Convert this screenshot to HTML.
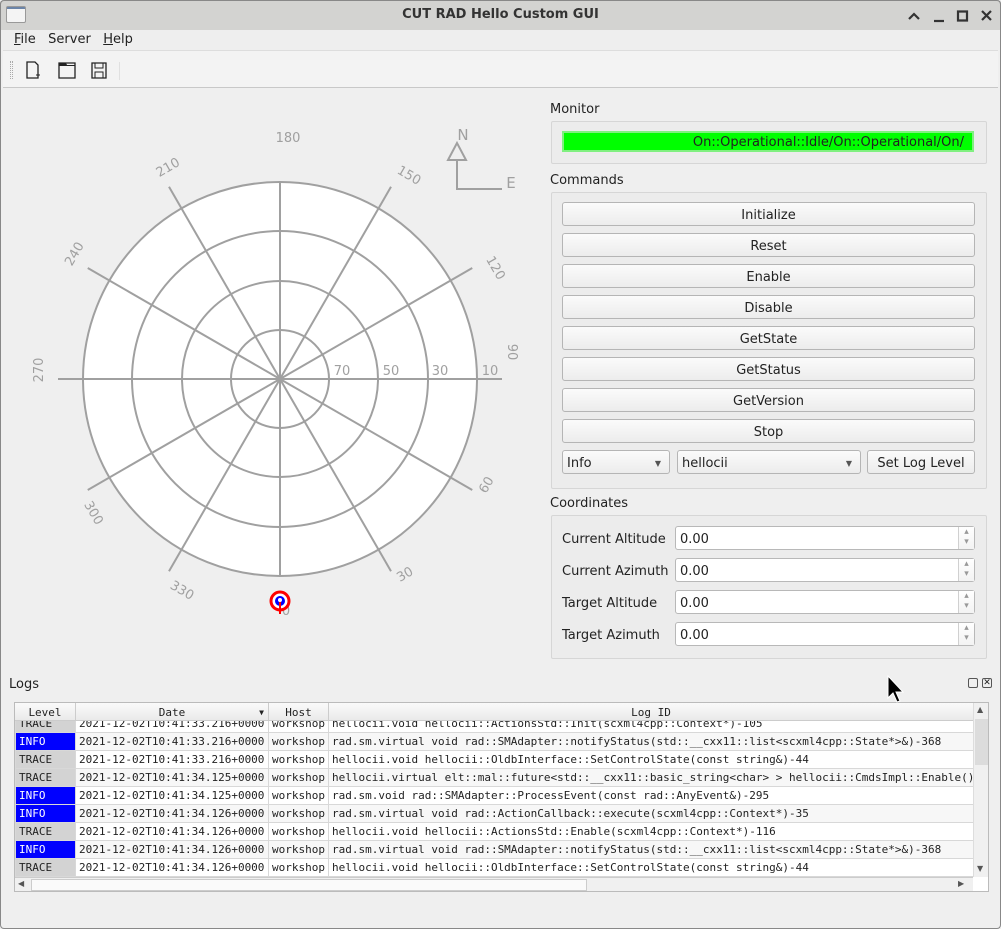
<!DOCTYPE html>
<html><head><meta charset="utf-8"><style>
*{box-sizing:border-box;margin:0;padding:0}
body{width:1001px;height:929px;overflow:hidden;background:#efefef;font-family:"DejaVu Sans","Liberation Sans",sans-serif;font-size:13px;color:#222;position:relative}
.a{position:absolute}
.btn{position:absolute;left:562px;width:413px;height:24px;border:1px solid #b5b5b5;border-radius:3px;background:linear-gradient(#fbfbfb,#ececec);text-align:center;line-height:22px;padding-top:2px;font-size:13px}
.grp{position:absolute;border:1px solid #d6d6d6;border-radius:2px;background:#ececec}
.spin{position:absolute;left:675px;width:300px;height:24px;border:1px solid #b8b8b8;border-radius:3px;background:#fff;line-height:22px;padding-top:2px;padding-left:4px}
.spin:after{content:"▴\A▾";white-space:pre;font-size:9px;line-height:10px;color:#999;text-align:center;position:absolute;right:0;top:0;width:15px;height:22px;border-left:1px solid #d0d0d0;background:linear-gradient(#fff,#f3f3f3)}
.lbl{position:absolute;left:562px}
table{border-collapse:collapse;font-family:"DejaVu Sans Mono","Liberation Mono",monospace;font-size:11px}
td{height:18px;border:1px solid #d8d8d8;padding:0 3px;white-space:nowrap;overflow:hidden}
tr:nth-child(even) td{background:#f7f7f7}
td.t{background:#d3d3d3!important}
td.i{background:#0000ff!important;color:#fff}
</style></head><body>
<div class="a" style="left:0;top:0;width:1001px;height:30px;background:#d3d3d1;border:1px solid #888;border-bottom:none;border-radius:4px 4px 0 0"></div>
<div class="a" style="left:6px;top:6px;width:20px;height:17px;border:1px solid #999;border-radius:2px;background:linear-gradient(#6b84a8 0 2px,#f4f4f4 2px)"></div>
<div class="a" style="left:0;top:7px;width:1001px;text-align:center;font-weight:bold;font-size:13px;color:#333">CUT RAD Hello Custom GUI</div>
<svg class="a" style="left:905px;top:8px" width="90" height="16" stroke="#333" stroke-width="2.2" fill="none">
<path d="M4 11l5-5 5 5"/><path d="M29 13h10"/><path d="M53 3.5h9v9h-9z"/><path d="M77 3l9 9M86 3l-9 9"/></svg>
<div class="a" style="left:0;top:30px;width:1001px;height:20px;background:#eeeeee"></div>
<div class="a" style="left:14px;top:32px"><u>F</u>ile &nbsp;&nbsp;Server &nbsp;&nbsp;<u>H</u>elp</div>
<div class="a" style="left:3px;top:50px;width:995px;height:38px;background:#f3f3f3;border-top:1px solid #ddd;border-bottom:1px solid #c8c8c8"></div>
<div class="a" style="left:10px;top:61px;width:3px;height:18px;border-left:1px dotted #aaa;border-right:1px dotted #aaa"></div>
<svg class="a" style="left:20px;top:58px" width="100" height="24">
<path d="M7 4h8l3 3v13H7z" fill="none" stroke="#222" stroke-width="1.3"/><path d="M16 17h4M18 15v4" stroke="#222"/>
<path d="M39 5h16v15H39z" fill="none" stroke="#222" stroke-width="1.3"/><path d="M39 5h7l1 2h8v1H39z" fill="#222"/>
<path d="M72 5h14v15H72z" fill="none" stroke="#222" stroke-width="1.3"/><path d="M75 5v5h8V5M75 20v-6h8v6" fill="none" stroke="#222"/>
<path d="M100 4v18" stroke="#ccc"/>
</svg>
<svg class="a" style="left:0;top:90px" width="545" height="590">
<g transform="translate(280,289)" stroke="#a0a0a0" stroke-width="2" fill="none">
<circle r="197" fill="#fff"/><circle r="148"/><circle r="98"/><circle r="49"/>
<line x1="-222" x2="222"/><line y1="-197" y2="197"/>
<g transform="rotate(30)"><line y1="-222" y2="222"/></g>
<g transform="rotate(60)"><line y1="-222" y2="222"/></g>
<g transform="rotate(-30)"><line y1="-222" y2="222"/></g>
<g transform="rotate(-60)"><line y1="-222" y2="222"/></g>
</g>
<g fill="#a0a0a0" font-size="13" text-anchor="middle" font-family="DejaVu Sans,sans-serif">
<text x="288" y="52">180</text>
<text transform="translate(407,89) rotate(30)">150</text>
<text transform="translate(492,180) rotate(60)">120</text>
<text transform="translate(508,262) rotate(90)">90</text>
<text transform="translate(490,397) rotate(-60)">60</text>
<text transform="translate(407,488) rotate(-30)">30</text>
<text x="286" y="525">0</text>
<text transform="translate(180,504) rotate(30)">330</text>
<text transform="translate(90,425) rotate(60)">300</text>
<text transform="translate(43,280) rotate(-90)">270</text>
<text transform="translate(78,166) rotate(-60)">240</text>
<text transform="translate(170,81) rotate(-30)">210</text>
<text x="342" y="285">70</text><text x="391" y="285">50</text><text x="440" y="285">30</text><text x="490" y="285">10</text>
<text x="463" y="50" font-size="15">N</text><text x="511" y="98" font-size="15">E</text>
</g>
<path d="M457 53l-9 17h18z M457 70v29h45" fill="none" stroke="#a0a0a0" stroke-width="2"/>
<circle cx="280" cy="511" r="9" fill="#fff" stroke="#f00" stroke-width="3"/><circle cx="280" cy="511" r="5" fill="#00f"/><path d="M280 509v15" stroke="#f00" stroke-width="2"/><circle cx="280" cy="510" r="2" fill="#fff"/>
</svg>
<div class="a" style="left:550px;top:102px">Monitor</div>
<div class="grp" style="left:551px;top:121px;width:436px;height:43px"></div>
<div class="a" style="left:562px;top:131px;width:412px;height:21px;background:#00ff00;border:2px solid #80f080;text-align:right;padding-right:8px;line-height:19px">On::Operational::Idle/On::Operational/On/</div>
<div class="a" style="left:550px;top:173px">Commands</div>
<div class="grp" style="left:551px;top:192px;width:436px;height:297px"></div>
<div class="btn" style="top:202px">Initialize</div>
<div class="btn" style="top:233px">Reset</div>
<div class="btn" style="top:264px">Enable</div>
<div class="btn" style="top:295px">Disable</div>
<div class="btn" style="top:326px">GetState</div>
<div class="btn" style="top:357px">GetStatus</div>
<div class="btn" style="top:388px">GetVersion</div>
<div class="btn" style="top:419px">Stop</div>
<div class="btn" style="top:450px;width:108px;text-align:left;padding-left:4px">Info<span style="position:absolute;right:8px;font-size:8px;color:#555">▼</span></div>
<div class="btn" style="top:450px;left:677px;width:184px;text-align:left;padding-left:4px">hellocii<span style="position:absolute;right:8px;font-size:8px;color:#555">▼</span></div>
<div class="btn" style="top:450px;left:867px;width:108px">Set Log Level</div>
<div class="a" style="left:550px;top:496px">Coordinates</div>
<div class="grp" style="left:551px;top:515px;width:436px;height:144px"></div>
<div class="lbl" style="top:532px">Current Altitude</div><div class="spin" style="top:526px">0.00</div>
<div class="lbl" style="top:564px">Current Azimuth</div><div class="spin" style="top:558px">0.00</div>
<div class="lbl" style="top:596px">Target Altitude</div><div class="spin" style="top:590px">0.00</div>
<div class="lbl" style="top:628px">Target Azimuth</div><div class="spin" style="top:622px">0.00</div>
<div class="a" style="left:9px;top:677px">Logs</div>
<div class="a" style="left:968px;top:678px;width:10px;height:10px;border:1px solid #555;border-radius:2px"></div>
<div class="a" style="left:982px;top:678px;width:10px;height:10px;border:1px solid #555;border-radius:2px;font-size:9px;line-height:8px;text-align:center">✕</div>
<div class="a" style="left:14px;top:702px;width:975px;height:190px;border:1px solid #bbb;background:#fff;overflow:hidden">
<div class="a" style="left:0;top:0;width:958px;height:18px;background:linear-gradient(#fafafa,#eaeaea);border-bottom:1px solid #ccc;font-family:'DejaVu Sans Mono',monospace;font-size:11px;line-height:19px">
<span class="a" style="left:0;width:60px;text-align:center">Level</span>
<span class="a" style="left:60px;width:193px;text-align:center;border-left:1px solid #ccc">Date<span style="position:absolute;right:4px;font-size:8px">▼</span></span>
<span class="a" style="left:253px;width:60px;text-align:center;border-left:1px solid #ccc">Host</span>
<span class="a" style="left:313px;width:645px;text-align:center;border-left:1px solid #ccc">Log ID</span></div>
<div class="a" style="left:0;top:11px;width:958px;height:163px;overflow:hidden;clip-path:inset(7px 0 0 0)">
<table style="width:1100px">
<col style="width:60px"><col style="width:193px"><col style="width:60px"><col>
<tr><td class="t">TRACE</td><td>2021-12-02T10:41:33.216+0000</td><td>workshop</td><td>hellocii.void hellocii::ActionsStd::Init(scxml4cpp::Context*)-105</td></tr>
<tr><td class="i">INFO</td><td>2021-12-02T10:41:33.216+0000</td><td>workshop</td><td>rad.sm.virtual void rad::SMAdapter::notifyStatus(std::__cxx11::list&lt;scxml4cpp::State*&gt;&amp;)-368</td></tr>
<tr><td class="t">TRACE</td><td>2021-12-02T10:41:33.216+0000</td><td>workshop</td><td>hellocii.void hellocii::OldbInterface::SetControlState(const string&amp;)-44</td></tr>
<tr><td class="t">TRACE</td><td>2021-12-02T10:41:34.125+0000</td><td>workshop</td><td>hellocii.virtual elt::mal::future&lt;std::__cxx11::basic_string&lt;char&gt; &gt; hellocii::CmdsImpl::Enable()</td></tr>
<tr><td class="i">INFO</td><td>2021-12-02T10:41:34.125+0000</td><td>workshop</td><td>rad.sm.void rad::SMAdapter::ProcessEvent(const rad::AnyEvent&amp;)-295</td></tr>
<tr><td class="i">INFO</td><td>2021-12-02T10:41:34.126+0000</td><td>workshop</td><td>rad.sm.virtual void rad::ActionCallback::execute(scxml4cpp::Context*)-35</td></tr>
<tr><td class="t">TRACE</td><td>2021-12-02T10:41:34.126+0000</td><td>workshop</td><td>hellocii.void hellocii::ActionsStd::Enable(scxml4cpp::Context*)-116</td></tr>
<tr><td class="i">INFO</td><td>2021-12-02T10:41:34.126+0000</td><td>workshop</td><td>rad.sm.virtual void rad::SMAdapter::notifyStatus(std::__cxx11::list&lt;scxml4cpp::State*&gt;&amp;)-368</td></tr>
<tr><td class="t">TRACE</td><td>2021-12-02T10:41:34.126+0000</td><td>workshop</td><td>hellocii.void hellocii::OldbInterface::SetControlState(const string&amp;)-44</td></tr>
</table></div>
<div class="a" style="left:958px;top:0;width:16px;height:174px;background:#f0f0f0;border-left:1px solid #ddd"><div class="a" style="left:1px;top:16px;width:13px;height:46px;background:#dcdcdc"></div><span class="a" style="left:3px;top:2px;font-size:8px;color:#555">▲</span><span class="a" style="left:3px;top:161px;font-size:8px;color:#555">▼</span></div>
<div class="a" style="left:0;top:174px;width:958px;height:15px;background:#f0f0f0;border-top:1px solid #ccc"><div class="a" style="left:16px;top:1px;width:556px;height:12px;background:#fafafa;border:1px solid #ccc"></div><span class="a" style="left:3px;top:1px;font-size:8px;color:#555">◀</span><span class="a" style="left:943px;top:1px;font-size:8px;color:#555">▶</span></div>
</div>
<div class="a" style="left:0;top:0;width:1001px;height:929px;border:1px solid #888;border-top:none;pointer-events:none;border-radius:4px"></div>
<svg class="a" style="left:886px;top:674px" width="20" height="30"><path d="M2 2v22l5-5 4 9 3-1-4-9h7z" fill="#000" stroke="#fff"/></svg>
</body></html>
